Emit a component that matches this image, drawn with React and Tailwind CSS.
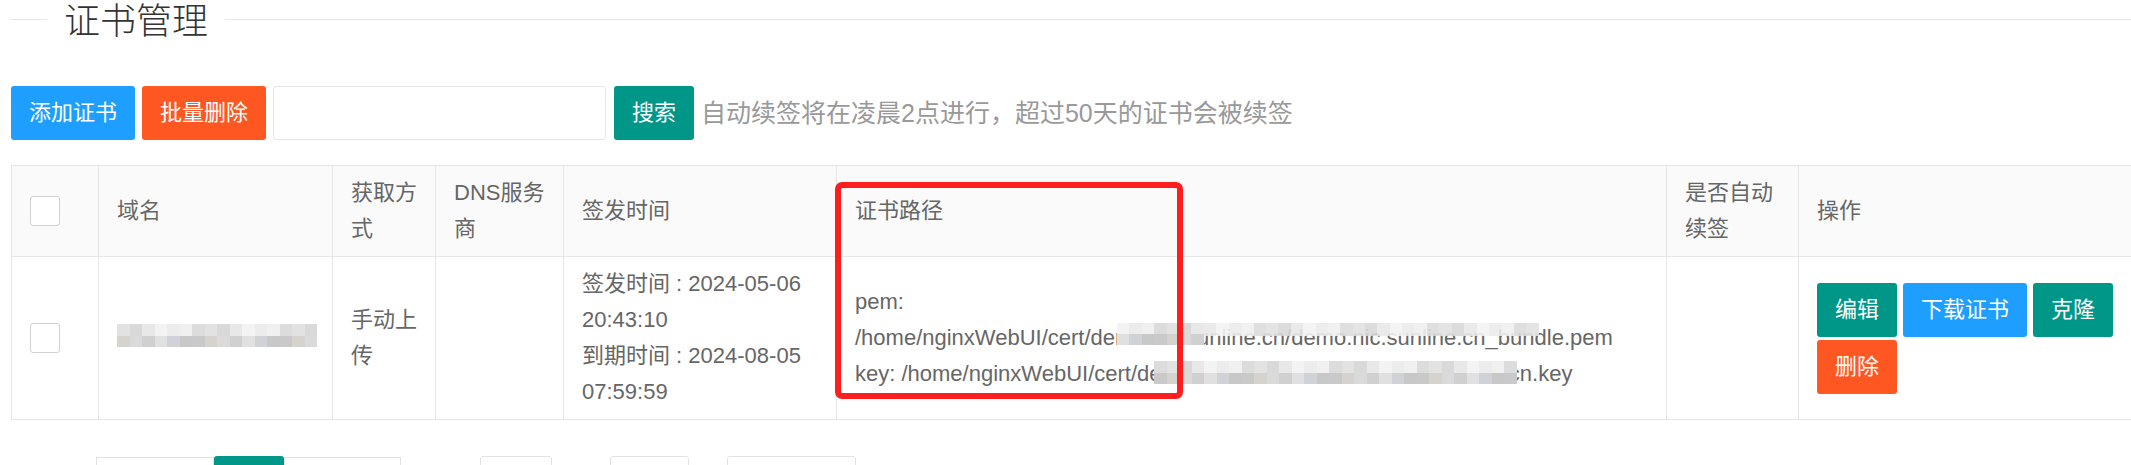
import React from "react";

const LIGHT = [
  "bg-[#ececec]",
  "bg-[#e2e2e2]",
  "bg-[#f3f3f3]",
  "bg-[#dcdcdc]",
  "bg-[#e8e8e8]",
  "bg-[#f0f0f0]",
  "bg-[#d9d9d9]",
];
const DARK = [
  "bg-[#d0d0d0]",
  "bg-[#c8c8c8]",
  "bg-[#dadada]",
  "bg-[#cfd2d6]",
  "bg-[#d6d3cf]",
  "bg-[#e0e0e0]",
  "bg-[#c9c9c9]",
];

function Mosaic({ cols, rows, cell, seed = 0 }) {
  return (
    <div className="flex flex-col">
      {rows.map((pal, r) => (
        <div key={r} className="flex">
          {Array.from({ length: cols }).map((_, c) => {
            const p = pal === "dark" ? DARK : LIGHT;
            const cls = p[(c * 5 + r * 3 + seed) % p.length];
            return <div key={c} className={`${cell} ${cls}`} />;
          })}
        </div>
      ))}
    </div>
  );
}

function Btn({ color, className = "", children }) {
  return (
    <button
      className={`inline-flex h-[54px] items-center whitespace-nowrap rounded-[3px] px-[18px] text-[22px] leading-none text-white ${color} ${className}`}
    >
      {children}
    </button>
  );
}

function Check() {
  return <div className="h-[30px] w-[30px] rounded-[3px] border border-[#d2d2d2] bg-white" />;
}

const cellCls =
  "border border-[#e6e6e6] px-[18px] py-[9px] text-left align-middle text-[22px] font-normal leading-[36px] text-[#666]";

export default function App() {
  return (
    <div className="relative h-[465px] w-[2131px] overflow-hidden bg-white font-['Liberation_Sans','Noto_Sans_CJK_SC',sans-serif] text-[#666]">
      <div className="pl-[11px]">
        {/* title */}
        <div className="flex h-[38px] items-center">
          <div className="h-px w-[36px] bg-[#e6e6e6]" />
          <div className="px-[17px] pt-[6px] text-[36px] font-light leading-[38px] text-[#333]">证书管理</div>
          <div className="h-px flex-1 bg-[#e6e6e6]" />
        </div>

        {/* toolbar */}
        <div className="mt-[48px] flex items-center">
          <Btn color="bg-[#1e9fff]">添加证书</Btn>
          <Btn color="bg-[#ff5722]" className="ml-[7px]">批量删除</Btn>
          <input className="ml-[7px] h-[54px] w-[333px] rounded-[3px] border border-[#e6e6e6] bg-white px-[12px] text-[22px] outline-none" />
          <Btn color="bg-[#009688]" className="ml-[8px]">搜索</Btn>
          <span className="ml-[7px] whitespace-nowrap text-[25px] leading-none text-[#999]">
            自动续签将在凌晨2点进行，超过50天的证书会被续签
          </span>
        </div>

        {/* table */}
        <table className="mt-[25px] w-[2147px] table-fixed border-collapse">
          <colgroup>
            <col className="w-[87px]" />
            <col className="w-[234px]" />
            <col className="w-[103px]" />
            <col className="w-[128px]" />
            <col className="w-[273px]" />
            <col className="w-[830px]" />
            <col className="w-[132px]" />
            <col className="w-[360px]" />
          </colgroup>
          <thead>
            <tr className="bg-[#fafafa]">
              <th className={cellCls}>
                <Check />
              </th>
              <th className={cellCls}>域名</th>
              <th className={cellCls}>
                <span className="whitespace-nowrap">获取方</span>
                <br />式
              </th>
              <th className={cellCls}>
                <span className="whitespace-nowrap">DNS服务</span>
                <br />商
              </th>
              <th className={cellCls}>签发时间</th>
              <th className={cellCls}>证书路径</th>
              <th className={cellCls}>
                <span className="whitespace-nowrap">是否自动</span>
                <br />续签
              </th>
              <th className={cellCls}>操作</th>
            </tr>
          </thead>
          <tbody>
            <tr className="bg-white">
              <td className={cellCls}>
                <Check />
              </td>
              <td className={cellCls}>
                <div className="mb-[5px] w-fit">
                  <Mosaic cols={16} rows={["light", "dark"]} cell="w-[12.5px] h-[11.5px]" seed={1} />
                </div>
              </td>
              <td className={cellCls}>
                <span className="whitespace-nowrap">手动上</span>
                <br />传
              </td>
              <td className={cellCls}></td>
              <td className={cellCls}>
                <div className="whitespace-nowrap">签发时间 : 2024-05-06</div>
                <div>20:43:10</div>
                <div className="whitespace-nowrap">到期时间 : 2024-08-05</div>
                <div>07:59:59</div>
              </td>
              <td className={cellCls}>
                <div className="relative">
                  <div>pem: /home/nginxWebUI/cert/demo.nic.sunline.cn/demo.nic.sunline.cn_bundle.pem</div>
                  <div className="whitespace-nowrap">key: /home/nginxWebUI/cert/demo.nic.sunline.cn/demo.nic.sunline.cn.key</div>
                  <div className="absolute left-[262px] top-[39px]">
                    <Mosaic cols={7} rows={["light", "dark"]} cell="w-[12.4px] h-[11px]" seed={2} />
                  </div>
                  <div className="absolute left-[349px] top-[39px] opacity-90">
                    <Mosaic cols={27} rows={["light"]} cell="w-[12.4px] h-[13px]" seed={4} />
                  </div>
                  <div className="absolute left-[299px] top-[77px]">
                    <Mosaic cols={29} rows={["light", "dark"]} cell="w-[12.5px] h-[11.5px]" seed={3} />
                  </div>
                </div>
              </td>
              <td className={cellCls}></td>
              <td className={cellCls}>
                <div className="flex flex-wrap gap-x-[6px] gap-y-[3px]">
                  <Btn color="bg-[#009688]">编辑</Btn>
                  <Btn color="bg-[#1e9fff]">下载证书</Btn>
                  <Btn color="bg-[#009688]">克隆</Btn>
                  <Btn color="bg-[#ff5722]">删除</Btn>
                </div>
              </td>
            </tr>
          </tbody>
        </table>

        {/* pagination (mostly cut off by the window edge) */}
        <div className="ml-[85px] mt-[36px] flex items-start">
          <div className="mt-[1px] flex">
            <div className="h-[42px] w-[118px] border border-[#e2e2e2]" />
            <div className="-mt-[1px] h-[44px] w-[70px] rounded-t-[3px] bg-[#009688]" />
            <div className="h-[42px] w-[117px] border border-[#e2e2e2]" />
          </div>
          <div className="ml-[79px] h-[42px] w-[72px] rounded-[3px] border border-[#e2e2e2]" />
          <div className="ml-[58px] h-[42px] w-[79px] rounded-[3px] border border-[#e2e2e2]" />
          <div className="ml-[38px] h-[42px] w-[129px] rounded-[3px] border border-[#e2e2e2]" />
        </div>
      </div>

      {/* red annotation box */}
      <div className="absolute left-[835px] top-[182px] h-[217px] w-[348px] rounded-[7px] border-[6px] border-[#ff1e1e]" />
    </div>
  );
}
